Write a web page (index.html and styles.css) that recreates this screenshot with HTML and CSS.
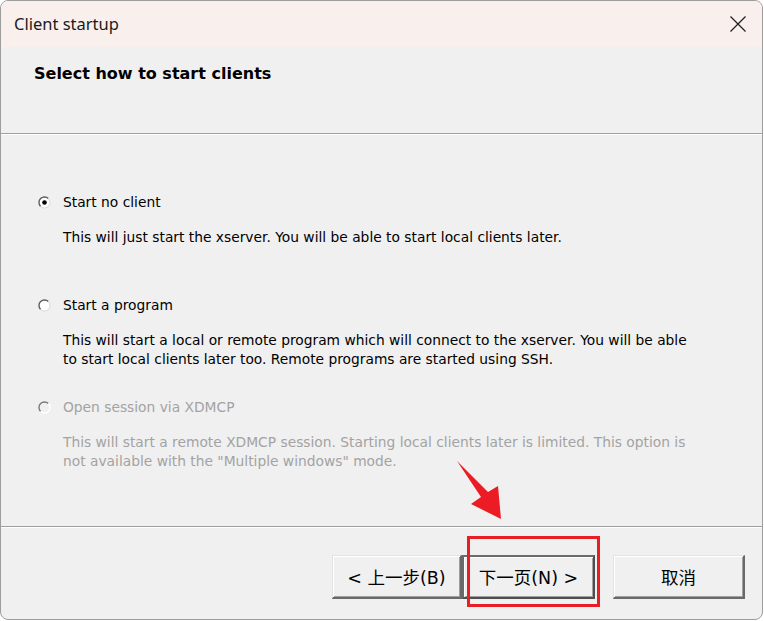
FILE: index.html
```html
<!DOCTYPE html>
<html>
<head>
<meta charset="utf-8">
<link rel="stylesheet" href="styles.css">
</head>
<body>
<div class="window">
  <div class="titlebar">
    <span class="title">Client startup</span>
    <svg class="close" width="16" height="16" viewBox="0 0 16 16"><path d="M0.5 0.5 L15.5 15.5 M15.5 0.5 L0.5 15.5" stroke="#1c1c1c" stroke-width="1.2" fill="none"/></svg>
  </div>
  <div class="header"><h1 class="heading">Select how to start clients</h1></div>
  <div class="sep"></div>
  <div class="content">
    <div class="option">
      <div class="opt-row">
        <svg class="radio" width="13" height="13" viewBox="0 0 13 13">
          <circle cx="6.5" cy="6.5" r="5.5" fill="#fff"/>
          <path d="M2.6 10.4 A5.5 5.5 0 0 1 10.4 2.6" stroke="#5e5e5e" stroke-width="1.4" fill="none"/>
          <path d="M10.4 2.6 A5.5 5.5 0 0 1 2.6 10.4" stroke="#e2e2e2" stroke-width="1.4" fill="none"/>
          <circle cx="6.5" cy="6.5" r="2.3" fill="#000"/>
        </svg>
        <span class="label">Start no client</span>
      </div>
      <p class="desc">This will just start the xserver. You will be able to start local clients later.</p>
    </div>
    <div class="option">
      <div class="opt-row">
        <svg class="radio" width="13" height="13" viewBox="0 0 13 13">
          <circle cx="6.5" cy="6.5" r="5.5" fill="#fff"/>
          <path d="M2.6 10.4 A5.5 5.5 0 0 1 10.4 2.6" stroke="#5e5e5e" stroke-width="1.4" fill="none"/>
          <path d="M10.4 2.6 A5.5 5.5 0 0 1 2.6 10.4" stroke="#e2e2e2" stroke-width="1.4" fill="none"/>
        </svg>
        <span class="label">Start a program</span>
      </div>
      <p class="desc">This will start a local or remote program which will connect to the xserver. You will be able<br>to start local clients later too. Remote programs are started using SSH.</p>
    </div>
    <div class="option disabled">
      <div class="opt-row">
        <svg class="radio" width="13" height="13" viewBox="0 0 13 13">
          <circle cx="6.5" cy="6.5" r="5.5" fill="#f0f0f0"/>
          <path d="M2.6 10.4 A5.5 5.5 0 0 1 10.4 2.6" stroke="#7a7a7a" stroke-width="1.4" fill="none"/>
          <path d="M10.4 2.6 A5.5 5.5 0 0 1 2.6 10.4" stroke="#ffffff" stroke-width="1.4" fill="none"/>
        </svg>
        <span class="label">Open session via XDMCP</span>
      </div>
      <p class="desc">This will start a remote XDMCP session. Starting local clients later is limited. This option is<br>not available with the "Multiple windows" mode.</p>
    </div>
  </div>
  <div class="sep"></div>
  <div class="footer">
    <div class="btn-pair">
      <button class="btn btn-back">&lt; 上一步(B)</button>
      <button class="btn btn-next">下一页(N) &gt;</button>
    </div>
    <button class="btn btn-cancel">取消</button>
  </div>
  <svg class="arrow" width="60" height="70" viewBox="455 458 60 70">
    <polygon points="457,461 488,492 498,486 501,519 471,504 481,497" fill="#ec1c24"/>
  </svg>
  <div class="highlight"></div>
</div>
</body>
</html>
```
FILE: styles.css
```css
html, body {
  margin: 0;
  padding: 0;
  background: #ffffff;
}
body {
  width: 764px;
  height: 621px;
  overflow: hidden;
}
.window {
  position: relative;
  box-sizing: border-box;
  width: 763px;
  height: 620px;
  border: 1px solid #9d9d9d;
  border-radius: 8px;
  background: #f0f0f0;
  overflow: hidden;
  font-family: "DejaVu Sans", "Noto Sans CJK SC", sans-serif;
  color: #000;
}
.titlebar {
  height: 46px;
  background: #f9f0ee;
  display: flex;
  align-items: center;
  justify-content: space-between;
  padding: 0 16px 0 13px;
}
.title {
  font-family: "Noto Sans", sans-serif;
  font-size: 16.5px;
  color: #1a1a1a;
  margin-top: -1px;
}
.close {
  display: block;
  margin-top: -1px;
}
.header {
  height: 86px;
  padding: 17px 0 0 33px;
  box-sizing: border-box;
}
.heading {
  margin: 0;
  font-size: 16px;
  line-height: 20px;
  font-weight: bold;
  color: #000;
}
.sep {
  height: 1px;
  background: #a0a0a0;
  border-bottom: 1px solid #ffffff;
}
.content {
  height: 391px;
  box-sizing: border-box;
  padding: 59px 0 0 37px;
}
.option {
  height: 102px;
}
.option:first-child {
  height: 103px;
}
.opt-row {
  display: flex;
  align-items: center;
  height: 16px;
}
.radio {
  display: block;
  margin-right: 12px;
}
.label {
  font-size: 13.8px;
  line-height: 16px;
}
.desc {
  margin: 18px 0 0 25px;
  font-size: 13.8px;
  line-height: 19px;
}
.disabled .label,
.disabled .desc {
  color: #a3a3a3;
}
.footer {
  display: flex;
  justify-content: flex-end;
  align-items: flex-start;
  gap: 18px;
  padding: 27px 17px 0 0;
}
.btn-pair {
  display: flex;
}
.btn {
  box-sizing: border-box;
  height: 44px;
  margin: 0;
  padding: 0 0 1px 0;
  background: #f0f0f0;
  font-family: "DejaVu Sans", "Noto Sans CJK SC", sans-serif;
  font-size: 17.5px;
  color: #000;
  border-style: solid;
  border-width: 1px 2px 2px 1px;
  border-color: #e3e3e3 #696969 #696969 #e3e3e3;
  box-shadow: inset 1px 1px 0 #ffffff, inset -1px -1px 0 #a0a0a0;
}
.btn-back {
  width: 130px;
}
.btn-next {
  width: 133px;
  border-width: 2px;
  border-color: #6a6a6a #4e4e4e #4e4e4e #6a6a6a;
  box-shadow: inset 1px 1px 0 #ffffff, inset -1px -1px 0 #a0a0a0;
}
.btn-cancel {
  width: 132px;
}
.arrow {
  position: absolute;
  left: 454px;
  top: 457px;
}
.highlight {
  position: absolute;
  left: 466px;
  top: 535px;
  width: 133px;
  height: 71px;
  box-sizing: border-box;
  border: 3px solid #e81e25;
}
```
